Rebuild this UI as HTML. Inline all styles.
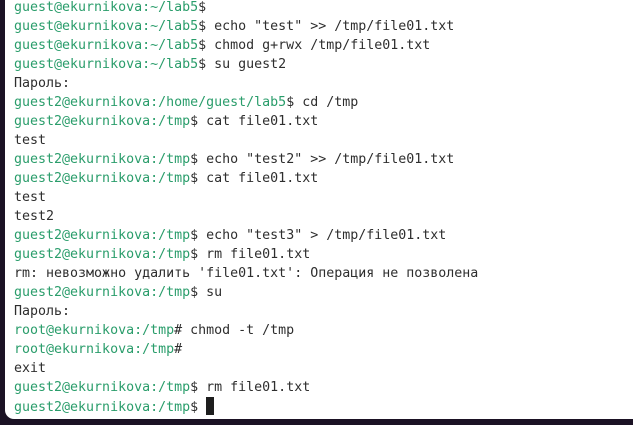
<!DOCTYPE html>
<html><head><meta charset="utf-8"><style>
html,body{margin:0;padding:0;width:633px;height:425px;overflow:hidden;background:#1b1224;}
.t{position:absolute;left:5px;top:-10px;width:700px;height:429px;background:#fff;border-radius:0 0 0 9px;}
pre{position:absolute;left:14px;top:-2px;margin:0;font-family:"DejaVu Sans Mono","Liberation Mono",monospace;font-size:13.3px;line-height:19px;color:#2e2e2e;}
.g{color:#2a9d6b;}
.c{display:inline-block;width:8px;height:18px;background:#1e1e1e;vertical-align:-4px;}
</style></head><body><div class="t"></div>
<pre><span class="g">guest@ekurnikova:~/lab5</span>$
<span class="g">guest@ekurnikova:~/lab5</span>$ echo "test" &gt;&gt; /tmp/file01.txt
<span class="g">guest@ekurnikova:~/lab5</span>$ chmod g+rwx /tmp/file01.txt
<span class="g">guest@ekurnikova:~/lab5</span>$ su guest2
Пароль:
<span class="g">guest2@ekurnikova:/home/guest/lab5</span>$ cd /tmp
<span class="g">guest2@ekurnikova:/tmp</span>$ cat file01.txt
test
<span class="g">guest2@ekurnikova:/tmp</span>$ echo "test2" &gt;&gt; /tmp/file01.txt
<span class="g">guest2@ekurnikova:/tmp</span>$ cat file01.txt
test
test2
<span class="g">guest2@ekurnikova:/tmp</span>$ echo "test3" &gt; /tmp/file01.txt
<span class="g">guest2@ekurnikova:/tmp</span>$ rm file01.txt
rm: невозможно удалить 'file01.txt': Операция не позволена
<span class="g">guest2@ekurnikova:/tmp</span>$ su
Пароль:
<span class="g">root@ekurnikova:/tmp</span># chmod -t /tmp
<span class="g">root@ekurnikova:/tmp</span>#
exit
<span class="g">guest2@ekurnikova:/tmp</span>$ rm file01.txt
<span class="g">guest2@ekurnikova:/tmp</span>$ <span class="c"></span></pre>
</body></html>
